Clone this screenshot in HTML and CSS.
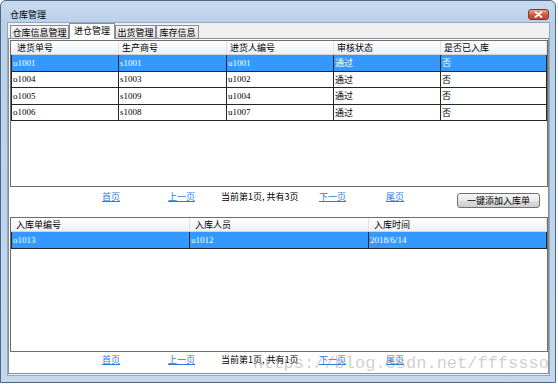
FILE: index.html
```html
<!DOCTYPE html>
<html lang="zh-CN">
<head>
  <meta charset="UTF-8" />
  <title>仓库管理</title>
  <link rel="stylesheet" href="styles.css">
</head>
<body>
<div class="window">
  <div class="titlebar">
    <span class="title">仓库管理</span>
    <button class="close-btn" aria-label="关闭">
      <svg width="9" height="7" viewBox="0 0 9 7"><path d="M1.5 1 L7.5 6 M7.5 1 L1.5 6" stroke="#fff" stroke-width="1.7" stroke-linecap="round"/></svg>
    </button>
  </div>

  <div class="client">
    <div class="tabs">
      <span class="tab tab-1">仓库信息管理</span>
      <span class="tab tab-2 active">进仓管理</span>
      <span class="tab tab-3">出货管理</span>
      <span class="tab tab-4">库存信息</span>
    </div>

    <div class="tabpage">
      <div class="grid grid-in">
        <div class="row head"><span>进货单号</span><span>生产商号</span><span>进货人编号</span><span>审核状态</span><span>是否已入库</span></div>
        <div class="row data selected"><span>o1001</span><span>s1001</span><span>u1001</span><span>通过</span><span>否</span></div>
        <div class="row data"><span>o1004</span><span>s1003</span><span>u1002</span><span>通过</span><span>否</span></div>
        <div class="row data"><span>o1005</span><span>s1009</span><span>u1004</span><span>通过</span><span>否</span></div>
        <div class="row data"><span>o1006</span><span>s1008</span><span>u1007</span><span>通过</span><span>否</span></div>
      </div>

      <div class="pager pager-top">
        <a href="#">首页</a>
        <a href="#">上一页</a>
        <span class="info">当前第1页, 共有3页</span>
        <a href="#">下一页</a>
        <a href="#">尾页</a>
        <button class="btn-add">一键添加入库单</button>
      </div>

      <div class="grid grid-out">
        <div class="row head"><span>入库单编号</span><span>入库人员</span><span>入库时间</span></div>
        <div class="row data selected"><span>o1013</span><span>u1012</span><span>2018/6/14</span></div>
      </div>

      <div class="pager pager-bottom">
        <a href="#">首页</a>
        <a href="#">上一页</a>
        <span class="info">当前第1页, 共有1页</span>
        <a href="#">下一页</a>
        <a href="#">尾页</a>
      </div>
    </div>
  </div>

  <div class="watermark">https://blog.csdn.net/fffssso</div>
</div>
</body>
</html>
```

FILE: styles.css
```css
* {
  box-sizing: border-box;
}

body {
  margin: 0;
  background: #fff;
  font-family: "Noto Sans CJK SC", sans-serif;
  font-size: 9px;
  color: #000;
}

.window {
  position: relative;
  width: 556px;
  height: 383px;
  border: 1px solid #4e6884;
  border-radius: 6px 6px 0 0;
  background: linear-gradient(to bottom, #c8daef 0, #b9d0ea 22px, #c3d8ef 100%);
  padding: 0 5px 6px 6px;
  display: flex;
  flex-direction: column;
}

.titlebar {
  height: 21px;
  display: flex;
  justify-content: space-between;
  align-items: flex-start;
}
.title {
  margin: 8px 0 0 3px;
  line-height: 12px;
}
.close-btn {
  margin: 8px 1px 0 0;
  width: 21px;
  height: 11px;
  padding: 0;
  border: 1px solid #83392c;
  border-radius: 3px;
  background: linear-gradient(#e7a896, #cf5d46 50%, #c0442e);
  display: flex;
  align-items: center;
  justify-content: center;
}

.client {
  flex: 1;
  background: #f0f0f0;
  border: 1px solid #93a7bf;
  padding-bottom: 1px;
  display: flex;
  flex-direction: column;
}

/* tabs */
.tabs {
  height: 15px;
  display: flex;
  align-items: flex-end;
  padding-left: 2px;
}
.tab {
  height: 13px;
  border: 1px solid #898c95;
  border-bottom: none;
  background: linear-gradient(#f4f4f4, #e3e3e3);
  display: flex;
  align-items: center;
  justify-content: center;
  line-height: 11px;
}
.tab.active {
  height: 16px;
  margin-bottom: -1px;
  background: #fff;
  position: relative;
  z-index: 1;
  align-items: flex-start;
  padding-top: 1px;
}
.tab-1 { width: 59px; }
.tab-2 { width: 46px; }
.tab-3 { width: 41px; }
.tab-4 { width: 43px; }

.tabpage {
  flex: 1;
  background: #fff;
  border: 1px solid #898c95;
  padding: 1px 0 0 1px;
  display: flex;
  flex-direction: column;
}

/* grids */
.grid {
  width: 538px;
  border: 1px solid #6d6d6d;
  background: #fff;
}
.grid-in {
  height: 147px;
}
.grid-out {
  height: 135px;
}
.row {
  display: grid;
}
.grid-in .row {
  grid-template-columns: 108px 108px 107px 107px 106px;
}
.grid-out .row {
  grid-template-columns: 179px 179px 178px;
}

.head {
  height: 14px;
  background: linear-gradient(#fff, #eef0f3);
  border-bottom: 1px solid #d0d3d8;
}
.head span {
  border-right: 1px solid #e0e2e6;
  padding-left: 3px;
  line-height: 13px;
  white-space: nowrap;
  overflow: hidden;
}
.head span:first-child {
  padding-left: 6px;
}
.grid-out .head span {
  padding-left: 5px;
}

.data {
  height: 16.5px;
  font-family: "Liberation Serif", "Noto Sans CJK SC", serif;
  font-size: 9px;
}
.data span {
  border-right: 1px solid #262626;
  border-bottom: 1px solid #262626;
  padding-left: 1px;
  display: flex;
  align-items: center;
  white-space: nowrap;
  overflow: hidden;
}
.data span:first-child {
  border-left: 1px solid #262626;
}
.selected {
  background: #3399ff;
  color: #fff;
}

/* pager */
.pager {
  display: grid;
  grid-template-columns: 66px 53px 98px 67px 71px 83px;
  align-items: start;
  padding-left: 92px;
}
.pager-top {
  height: 30px;
  padding-top: 4px;
}
.pager-bottom {
  padding-top: 2px;
}
.pager a {
  color: #2a7ad8;
  text-decoration: underline;
  line-height: 12px;
}
.pager .info {
  line-height: 12px;
  white-space: nowrap;
}
.btn-add {
  margin-top: 2px;
  width: 83px;
  height: 15px;
  padding: 0;
  border: 1px solid #707070;
  border-radius: 3px;
  background: linear-gradient(#f4f4f4 0, #ebebeb 50%, #dddddd 51%, #cfcfcf 100%);
  font-family: "Noto Sans CJK SC", sans-serif;
  font-size: 9px;
  line-height: 12px;
  color: #000;
}

.watermark {
  position: absolute;
  left: 252px;
  top: 354px;
  font-family: "Liberation Mono", monospace;
  font-size: 17px;
  line-height: 17px;
  color: rgba(160, 160, 160, 0.5);
  pointer-events: none;
  white-space: nowrap;
}
```
